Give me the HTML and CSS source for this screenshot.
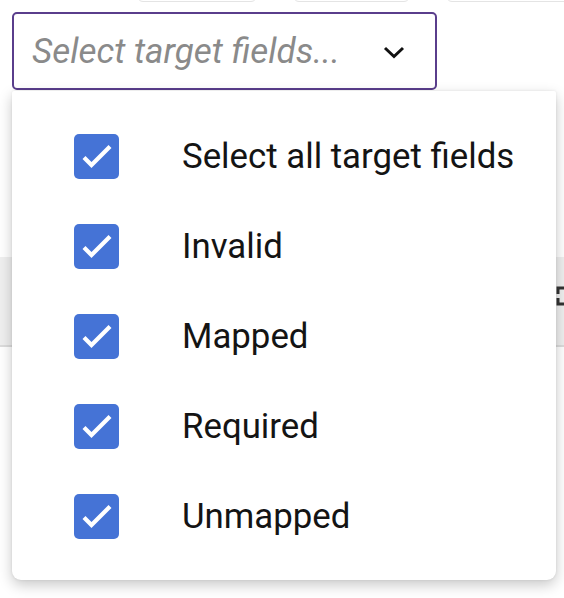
FILE: index.html
```html
<!DOCTYPE html>
<html>
<head>
<meta charset="utf-8">
<link rel="stylesheet" href="styles.css">
</head>
<body>
<div class="page">
  <div class="toolbar">
    <div class="tbtn b1"></div>
    <div class="tbtn b2"></div>
    <div class="tbtn b3"></div>
  </div>
  <div class="field">
    <span class="placeholder">Select target fields...</span>
    <svg class="chev" width="22" height="14" viewBox="0 0 22 14"><path d="M2 3 L11 11.5 L20 3" fill="none" stroke="#111" stroke-width="3"/></svg>
  </div>
  <div class="gap"></div>
  <div class="thead">
    <svg class="expand" width="20" height="24" viewBox="0 0 20 24"><path d="M2 10 V4 H8 M2 14 V20 H8" fill="none" stroke="#333" stroke-width="3"/></svg>
  </div>
  <div class="rest"></div>

  <div class="menu">
    <div class="item"><span class="cb"><svg width="45" height="45" viewBox="0 0 45 45"><path d="M10 23.5 L17.5 31 L36 12.5" fill="none" stroke="#fff" stroke-width="4.2"/></svg></span><span class="label">Select all target fields</span></div>
    <div class="item"><span class="cb"><svg width="45" height="45" viewBox="0 0 45 45"><path d="M10 23.5 L17.5 31 L36 12.5" fill="none" stroke="#fff" stroke-width="4.2"/></svg></span><span class="label">Invalid</span></div>
    <div class="item"><span class="cb"><svg width="45" height="45" viewBox="0 0 45 45"><path d="M10 23.5 L17.5 31 L36 12.5" fill="none" stroke="#fff" stroke-width="4.2"/></svg></span><span class="label">Mapped</span></div>
    <div class="item"><span class="cb"><svg width="45" height="45" viewBox="0 0 45 45"><path d="M10 23.5 L17.5 31 L36 12.5" fill="none" stroke="#fff" stroke-width="4.2"/></svg></span><span class="label">Required</span></div>
    <div class="item"><span class="cb"><svg width="45" height="45" viewBox="0 0 45 45"><path d="M10 23.5 L17.5 31 L36 12.5" fill="none" stroke="#fff" stroke-width="4.2"/></svg></span><span class="label">Unmapped</span></div>
  </div>
</div>
</body>
</html>
```

FILE: styles.css
```css
html, body {
  margin: 0;
  padding: 0;
  background: #fff;
  font-family: Roboto, "Liberation Sans", sans-serif;
}
.page {
  position: relative;
  width: 564px;
  height: 598px;
  overflow: hidden;
}
.toolbar {
  display: flex;
  height: 2px;
  padding-left: 137px;
  gap: 36px;
  align-items: flex-end;
}
.tbtn {
  height: 30px;
  flex: none;
  border: 1px solid #e4e4e4;
  border-radius: 6px;
  background: #fff;
  margin-top: -29px;
}
.b1 { width: 118px; }
.b2 { width: 115px; }
.b3 { width: 130px; }
.field {
  margin: 10px 0 0 12px;
  height: 74px;
  border: 2px solid #5a3e8c;
  border-radius: 5px;
  display: flex;
  align-items: center;
  padding: 0 30px 0 18px;
  box-sizing: content-box;
  width: 373px;
}
.placeholder {
  flex: 1;
  font-style: italic;
  font-size: 35px;
  color: #8a8a8a;
  white-space: nowrap;
}
.chev {
  flex: none;
  margin-top: 2px;
}
.gap {
  height: 167px;
}
.thead {
  height: 88px;
  background: #efefef;
  border-bottom: 2px solid #dcdcdc;
  display: flex;
  justify-content: flex-end;
  align-items: center;
}
.expand {
  margin-right: -12px;
  margin-top: -10px;
}
.rest {
  height: 250px;
  background: #fff;
}
.menu {
  position: absolute;
  left: 12px;
  top: 91px;
  width: 544px;
  height: 489px;
  background: #fff;
  border-radius: 2px 2px 9px 9px;
  box-shadow: 0 5px 14px rgba(0,0,0,0.22), 0 0 3px rgba(0,0,0,0.08);
  padding-top: 43px;
  box-sizing: border-box;
  display: flex;
  flex-direction: column;
  gap: 45px;
}
.item {
  display: flex;
  align-items: center;
  height: 45px;
  padding-left: 62px;
}
.cb {
  width: 45px;
  height: 45px;
  background: #4573d6;
  border-radius: 5px;
  display: flex;
  flex: none;
}
.label {
  margin-left: 63px;
  font-size: 34.8px;
  color: #141414;
  margin-top: -2px;
  white-space: nowrap;
}
```
